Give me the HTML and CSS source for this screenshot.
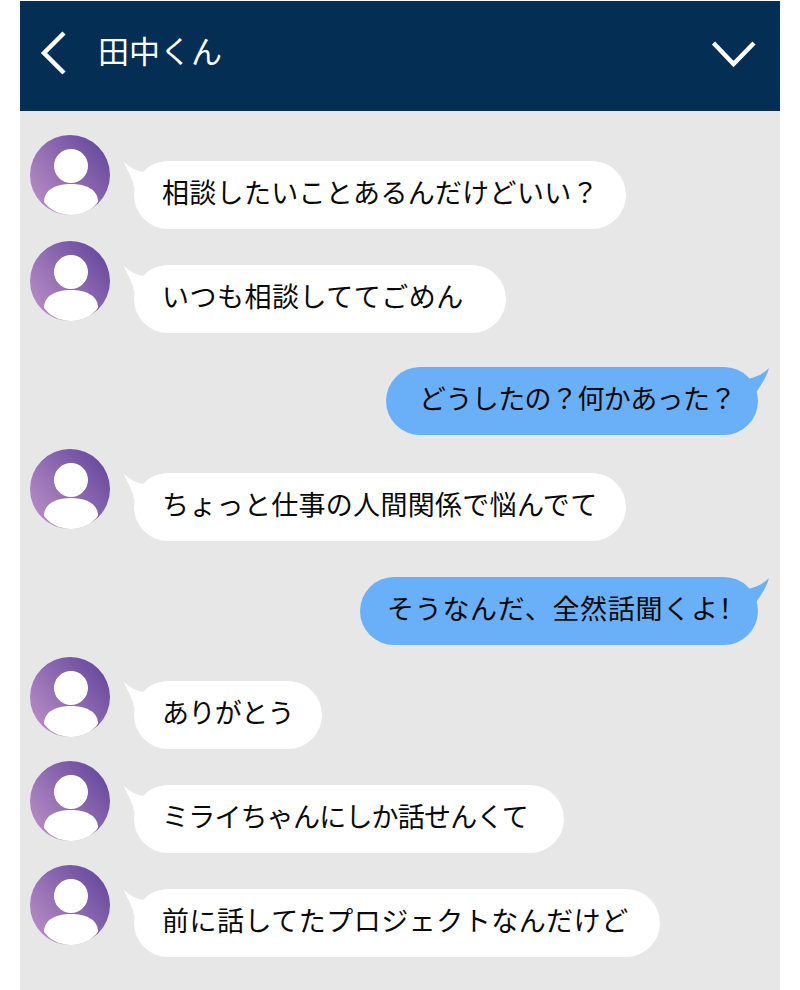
FILE: index.html
```html
<!DOCTYPE html>
<html lang="ja">
  <head>
    <meta charset="UTF-8" />
    <meta name="viewport" content="width=device-width, initial-scale=1.0" />
    <title>田中くん</title>
    <link rel="stylesheet" href="styles.css">
  </head>
  <body>
    <svg class="defs" width="0" height="0" aria-hidden="true">
      <defs>
        <linearGradient id="avatarGrad" x1="0" y1="0.9" x2="1" y2="0.1">
          <stop offset="0" stop-color="#bb90c6" />
          <stop offset="1" stop-color="#61459b" />
        </linearGradient>
        <symbol id="avatar" viewBox="0 0 80 80">
          <circle cx="40" cy="40" r="40" fill="url(#avatarGrad)" />
          <circle cx="41" cy="31" r="17" fill="#fff" />
          <path d="M14 67C14 54 27 49 41 49C55 49 68 54 68 67C62 75 52 80 41 80C30 80 20 75 14 67Z" fill="#fff" />
        </symbol>
        <symbol id="tailLeft" viewBox="0 0 26 30">
          <path d="M1 0C6 5 14 11 25 11L16 30L12 26C10 16 5 8 1 0Z" />
        </symbol>
        <symbol id="tailRight" viewBox="0 0 24 30">
          <path d="M23 1C18 6 11 10 2 12L8 30L11 24C16 17 21 9 23 1Z" />
        </symbol>
      </defs>
    </svg>

    <div class="chat">
      <div class="header">
        <svg class="back" width="30" height="48" viewBox="0 0 30 48">
          <path d="M24 3L4 23L24 43" />
        </svg>
        <div class="title">田中くん</div>
        <svg class="down" width="46" height="28" viewBox="0 0 46 28">
          <path d="M3.5 3L23.5 24L44 3" />
        </svg>
      </div>

      <div class="messages">
        <div class="row first">
          <svg class="avatar"><use href="#avatar" /></svg>
          <div class="bubble left w1 slight">相談したいことあるんだけどいい？<svg class="tail"><use href="#tailLeft" /></svg></div>
        </div>
        <div class="row">
          <svg class="avatar"><use href="#avatar" /></svg>
          <div class="bubble left w2 wide">いつも相談しててごめん<svg class="tail"><use href="#tailLeft" /></svg></div>
        </div>
        <div class="row right">
          <div class="bubble me w3 tight">どうしたの？何かあった？<svg class="tail"><use href="#tailRight" /></svg></div>
        </div>
        <div class="row after-me">
          <svg class="avatar"><use href="#avatar" /></svg>
          <div class="bubble left w1 slight">ちょっと仕事の人間関係で悩んでて<svg class="tail"><use href="#tailLeft" /></svg></div>
        </div>
        <div class="row right low">
          <div class="bubble me w4 wider">そうなんだ、全然話聞くよ<span class="bang">！</span><svg class="tail"><use href="#tailRight" /></svg></div>
        </div>
        <div class="row">
          <svg class="avatar"><use href="#avatar" /></svg>
          <div class="bubble left w5 tight">ありがとう<svg class="tail"><use href="#tailLeft" /></svg></div>
        </div>
        <div class="row">
          <svg class="avatar"><use href="#avatar" /></svg>
          <div class="bubble left w6 tighter">ミライちゃんにしか話せんくて<svg class="tail"><use href="#tailLeft" /></svg></div>
        </div>
        <div class="row">
          <svg class="avatar"><use href="#avatar" /></svg>
          <div class="bubble left w7 wide">前に話してたプロジェクトなんだけど<svg class="tail"><use href="#tailLeft" /></svg></div>
        </div>
      </div>
    </div>
  </body>
</html>
```

FILE: styles.css
```css
/* page */
html,
body {
  height: 100%;
}

body {
  margin: 0;
  padding-top: 1px;
  box-sizing: border-box;
  background-color: #ffffff;
  font-family: "Noto Sans CJK JP", "Noto Sans", sans-serif;
  overflow: hidden;
}

.defs {
  position: absolute;
}

.chat {
  width: 760px;
  height: 989px;
  margin: 0 auto;
  background-color: #e7e7e7;
}

/* header */
.header {
  height: 110px;
  display: flex;
  align-items: center;
  padding: 0 24px 4px 20px;
  box-sizing: border-box;
  background-color: #042e54;
}

.header svg {
  flex: none;
  fill: none;
  stroke: #ffffff;
  stroke-width: 4.5;
}

.title {
  flex: 1;
  margin: 0 0 10px 28px;
  font-size: 31px;
  color: #ffffff;
}

/* messages */
.messages {
  padding: 24px 22px 0 10px;
}

.row {
  display: flex;
  margin-top: 12px;
}

.row.first {
  margin-top: 0;
}

.row.right {
  justify-content: flex-end;
  margin-top: 34px;
}

.row.right.low {
  margin-top: 36px;
}

.row.after-me {
  margin-top: 14px;
}

.avatar {
  flex: none;
  width: 80px;
  height: 80px;
}

.bubble {
  position: relative;
  height: 68px;
  margin-top: 24px;
  border-radius: 34px;
  box-sizing: border-box;
  padding-left: 28px;
  font-size: 27px;
  line-height: 62px;
  color: #0a0a0a;
  white-space: nowrap;
}

.row.first .bubble {
  margin-top: 26px;
}

.bubble.left {
  margin-left: 24px;
  background-color: #ffffff;
  fill: #ffffff;
}

.bubble.me {
  padding-left: 33px;
  margin-top: 0;
  background-color: #6ab0f8;
  fill: #6ab0f8;
}

.bubble.me.w4 {
  padding-left: 27px;
}

.tail {
  position: absolute;
  top: 0;
  height: 30px;
}

.left .tail {
  left: -12px;
  width: 26px;
}

.me .tail {
  right: -12px;
  width: 24px;
}

.bang {
  font-feature-settings: "palt";
}

/* letter fit per line */
.wider { letter-spacing: 0.7px; }
.wide { letter-spacing: 0.5px; }
.slight { letter-spacing: 0.3px; }
.tight { letter-spacing: -0.6px; }
.tighter { letter-spacing: -0.8px; }

.w1 { width: 492px; }
.w2 { width: 372px; }
.w3 { width: 372px; }
.w4 { width: 398px; }
.w5 { width: 188px; }
.w6 { width: 430px; }
.w7 { width: 526px; }
```
